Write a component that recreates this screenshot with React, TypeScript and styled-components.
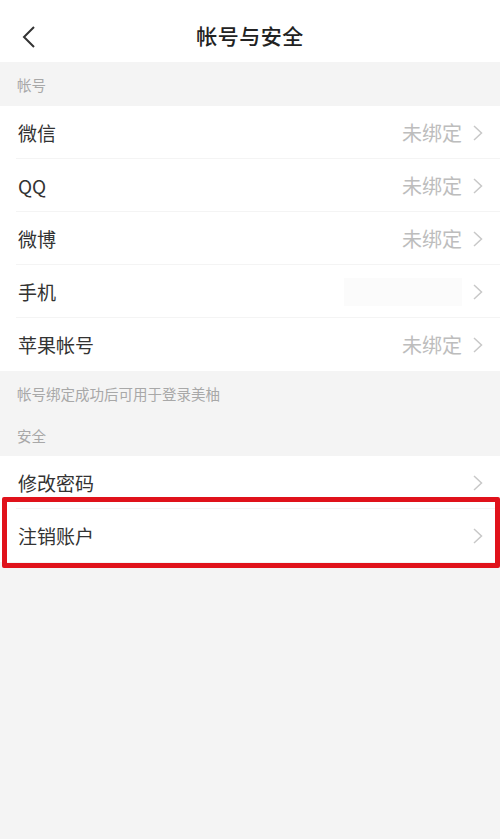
import React from "react";
import styled, { createGlobalStyle } from "styled-components";

const Global = createGlobalStyle`
  html, body { margin: 0; padding: 0; background: #f4f4f4; }
  body { font-family: "Noto Sans CJK SC", "Noto Sans", sans-serif; }
`;

const Page = styled.div`
  width: 500px;
  min-height: 839px;
  background: #f4f4f4;
  display: flex;
  flex-direction: column;
`;

const Header = styled.div`
  height: 62px;
  box-sizing: border-box;
  padding-top: 7px;
  background: #fff;
  display: flex;
  align-items: center;
  justify-content: center;
  position: relative;
`;

const BackButton = styled.div`
  position: absolute;
  left: 18px;
  top: 24px;
  width: 22px;
  height: 26px;
  display: flex;
  align-items: center;
  justify-content: center;
`;

const Title = styled.div`
  font-size: 21px;
  font-weight: 500;
  color: #222;
  letter-spacing: 0.5px;
`;

const SectionLabel = styled.div<{ $h: number }>`
  height: ${(p) => p.$h}px;
  display: flex;
  align-items: center;
  padding-left: 17px;
  font-size: 14.5px;
  color: #a8a8a8;
`;

const Group = styled.div`
  background: #fff;
  display: flex;
  flex-direction: column;
`;

const Row = styled.div<{ $last?: boolean }>`
  height: 53px;
  display: flex;
  align-items: center;
  padding: 0 16px 0 18px;
  position: relative;
  &::after {
    content: "";
    display: ${(p) => (p.$last ? "none" : "block")};
    position: absolute;
    left: 16px;
    right: 0;
    bottom: 0;
    height: 1px;
    background: #f4f4f4;
  }
`;

const Label = styled.div`
  flex: 1;
  font-size: 19px;
  color: #333;
`;

const Value = styled.div`
  font-size: 20px;
  color: #bdbdbd;
  margin-right: 10px;
`;

const Masked = styled.div`
  width: 118px;
  height: 28px;
  background: #fbfbfb;
  margin-right: 10px;
`;

const Highlight = styled.div`
  position: absolute;
  left: 2px;
  right: 0;
  top: -12px;
  bottom: -6px;
  border: 5px solid #e0121b;
  border-radius: 2px;
  pointer-events: none;
`;

const Chevron = () => (
  <svg width="12" height="18" viewBox="0 0 12 18">
    <path d="M2 2 L9.5 9 L2 16" fill="none" stroke="#c8c8c8" strokeWidth="1.5" />
  </svg>
);

const accounts: { label: string; value?: string; masked?: boolean }[] = [
  { label: "微信", value: "未绑定" },
  { label: "QQ", value: "未绑定" },
  { label: "微博", value: "未绑定" },
  { label: "手机", masked: true },
  { label: "苹果帐号", value: "未绑定" },
];

export default function App() {
  return (
    <>
      <Global />
      <Page>
        <Header>
          <BackButton>
            <svg width="16" height="24" viewBox="0 0 16 24">
              <path d="M13 2 L3 12 L13 22" fill="none" stroke="#333" strokeWidth="2" />
            </svg>
          </BackButton>
          <Title>帐号与安全</Title>
        </Header>
        <SectionLabel $h={44}>帐号</SectionLabel>
        <Group>
          {accounts.map((a, i) => (
            <Row key={a.label} $last={i === accounts.length - 1}>
              <Label>{a.label}</Label>
              {a.masked ? <Masked /> : <Value>{a.value}</Value>}
              <Chevron />
            </Row>
          ))}
        </Group>
        <SectionLabel $h={44}>帐号绑定成功后可用于登录美柚</SectionLabel>
        <SectionLabel $h={41}>安全</SectionLabel>
        <Group>
          <Row>
            <Label>修改密码</Label>
            <Chevron />
          </Row>
          <Row $last>
            <Label>注销账户</Label>
            <Chevron />
            <Highlight />
          </Row>
        </Group>
      </Page>
    </>
  );
}
